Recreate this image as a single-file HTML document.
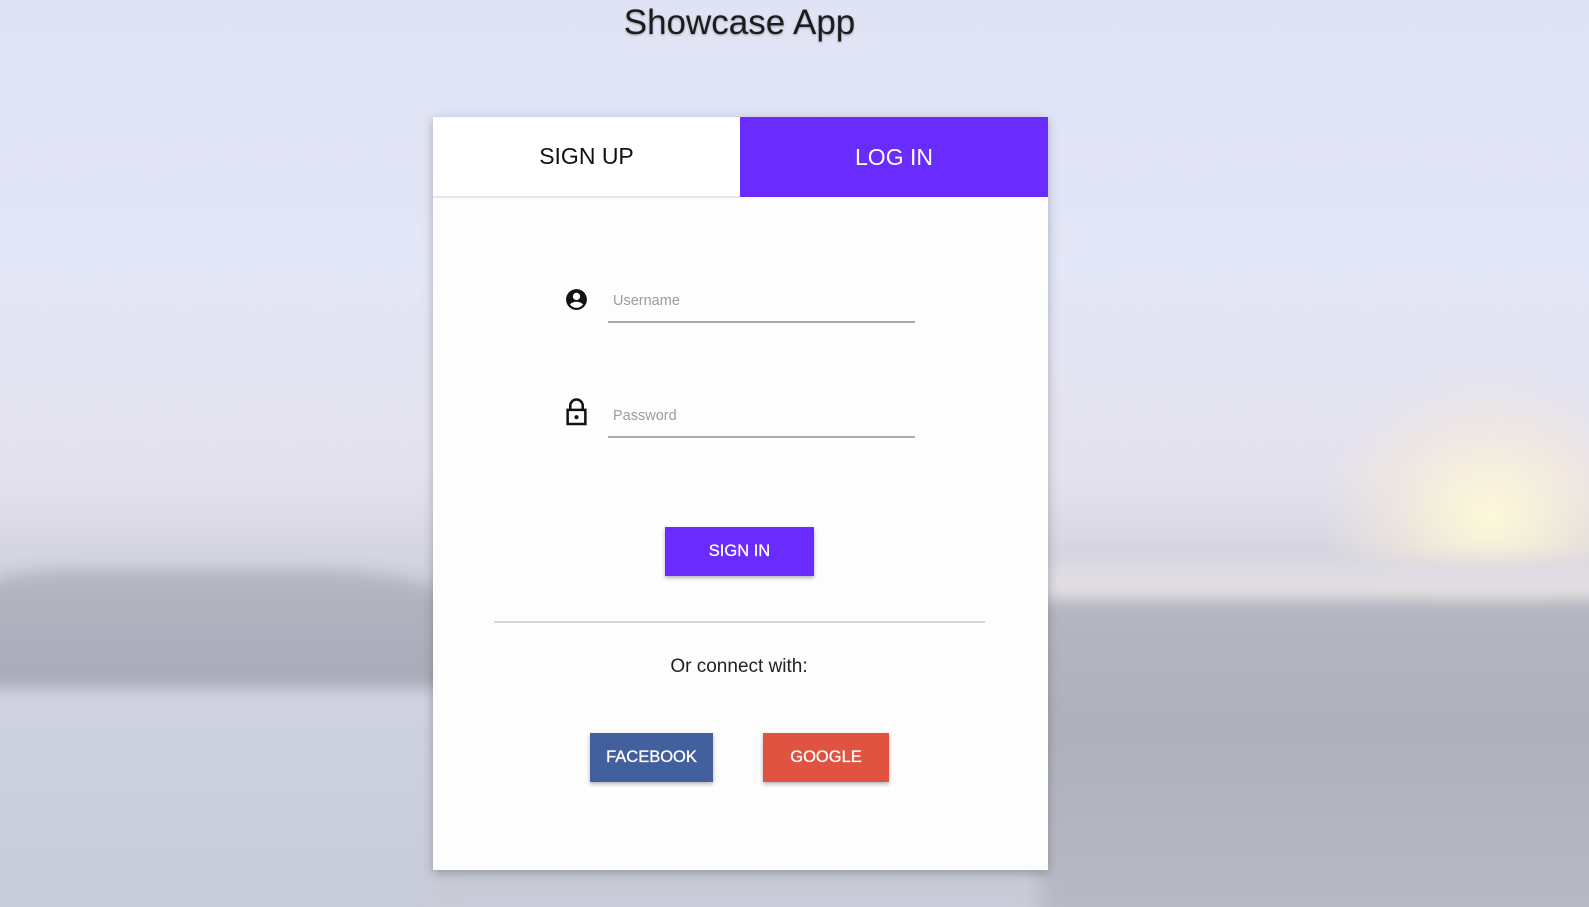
<!DOCTYPE html>
<html><head><meta charset="utf-8"><style>
html,body{margin:0;width:1589px;height:907px;overflow:hidden;font-family:"Liberation Sans",Arial,sans-serif}
body{position:relative;background:
radial-gradient(ellipse 170px 140px at 1490px 515px,rgba(255,250,215,0.95),rgba(250,235,215,0.5) 60%,rgba(240,225,235,0) 100%),
linear-gradient(180deg,#dfe3f4 0%,#e3e6f6 30%,#e5e2ee 52%,#d3d4e0 62%,#b9bcc9 72%,#c3c6d3 85%,#c9ccd8 100%);}
.bg{position:absolute;filter:blur(8px)}
.rocksL{left:-20px;top:570px;width:470px;height:120px;background:linear-gradient(180deg,#b4b6c2,#a8abb8);border-radius:20% 30% 0 0}
.rocksR{left:1040px;top:600px;width:569px;height:320px;background:linear-gradient(180deg,#b5b6c1,#aeb0bc 40%,#b8bac6);}
.sea{left:1040px;top:560px;width:569px;height:45px;background:linear-gradient(180deg,#d9d8e2,#e8e3e3)}
.water{left:-20px;top:690px;width:460px;height:240px;background:linear-gradient(180deg,#cfd2e0,#c7cad7)}
h1{position:absolute;left:0;width:1479px;text-align:center;top:3px;margin:0;font-weight:normal;font-size:35px;color:#1c1c1c;text-shadow:0 1px 2px rgba(0,0,0,.3)}
.card{position:absolute;left:433px;top:117px;width:615px;height:753px;background:#fdfdfd;box-shadow:0 3px 10px rgba(0,0,0,.25)}
.tab{position:absolute;top:0;height:80px;width:307px;display:flex;align-items:center;justify-content:center;font-size:23px}
.t1{left:0;background:#fff;color:#111;border-bottom:2px solid #e6e6e6;height:79px}
.t2{left:307px;width:308px;background:#6a2bff;color:#fff}
.field{position:absolute;left:175px;width:307px;border-bottom:2px solid #aaa;height:38px}
.field span{position:absolute;left:5px;top:10px;font-size:14.5px;color:#9c9c9c}
.btn{position:absolute;color:#fff;font-size:16.5px;display:flex;align-items:center;justify-content:center;box-shadow:0 2px 4px rgba(0,0,0,.3);-webkit-text-stroke:0.3px #fff}
</style></head><body>
<div class="bg sea"></div><div class="bg rocksR"></div><div class="bg rocksL"></div><div class="bg water"></div>
<h1>Showcase App</h1>
<div class="card">
<div class="tab t1">SIGN UP</div><div class="tab t2">LOG IN</div>
<svg style="position:absolute;left:131px;top:170px" width="25" height="25" viewBox="0 0 24 24"><path fill="#111" d="M12 2C6.48 2 2 6.48 2 12s4.48 10 10 10 10-4.48 10-10S17.52 2 12 2zm0 3.5c1.9 0 3.5 1.6 3.5 3.5S13.9 12.5 12 12.5 8.5 10.9 8.5 9 10.1 5.5 12 5.5zm0 14.5c-2.6 0-4.9-1.3-6.3-3.3 1.2-1.7 4.2-2.6 6.3-2.6s5.1.9 6.3 2.6C16.9 18.7 14.6 20 12 20z"/></svg>
<svg style="position:absolute;left:131px;top:280px" width="25" height="30" viewBox="0 0 24 28"><path fill="none" stroke="#111" stroke-width="2.4" d="M6 12V8a6 6 0 0 1 12 0v4M3.5 12h17v13.5h-17z"/><circle cx="12" cy="19" r="2" fill="#111"/></svg>
<div class="field" style="top:166px"><span>Username</span></div>
<div class="field" style="top:281px"><span>Password</span></div>
<div class="btn" style="left:232px;top:410px;width:149px;height:49px;background:#6a2bff">SIGN IN</div>
<div style="position:absolute;left:61px;top:504px;width:491px;height:2px;background:#d6d6d6"></div>
<div style="position:absolute;left:0;width:612px;text-align:center;top:539px;font-size:19px;color:#222">Or connect with:</div>
<div class="btn" style="left:157px;top:616px;width:123px;height:49px;background:#42609e">FACEBOOK</div>
<div class="btn" style="left:330px;top:616px;width:126px;height:49px;background:#df5340">GOOGLE</div>
</div>
</body></html>
